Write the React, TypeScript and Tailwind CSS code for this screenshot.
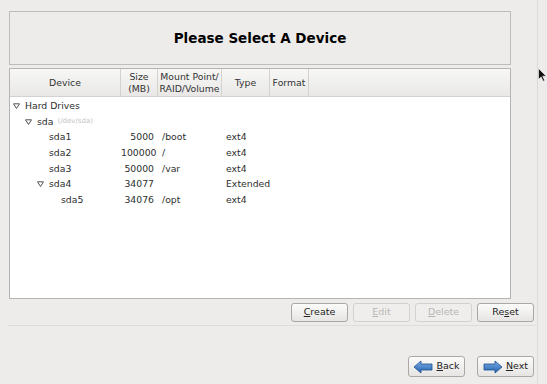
import React from "react";

type Row = {
  name: string;
  indent: number;
  expander?: boolean;
  note?: string;
  size?: string;
  mount?: string;
  type?: string;
};

const rows: Row[] = [
  { name: "Hard Drives", indent: 0, expander: true },
  { name: "sda", indent: 1, expander: true, note: "(/dev/sda)" },
  { name: "sda1", indent: 2, size: "5000", mount: "/boot", type: "ext4" },
  { name: "sda2", indent: 2, size: "100000", mount: "/", type: "ext4" },
  { name: "sda3", indent: 2, size: "50000", mount: "/var", type: "ext4" },
  { name: "sda4", indent: 2, expander: true, size: "34077", type: "Extended" },
  { name: "sda5", indent: 3, size: "34076", mount: "/opt", type: "ext4" },
];

// left edge of the name text for each depth
const namePad = ["pl-[15px]", "pl-[27px]", "pl-[39px]", "pl-[51px]"];
// left edge of the expander triangle for each depth
const triLeft = ["left-[3px]", "left-[15px]", "left-[27px]", "left-[39px]"];

function Triangle() {
  return (
    <svg width="7" height="6" viewBox="0 0 7 6">
      <path d="M0.5 0.8h6L3.5 5.5z" fill="none" stroke="#555" strokeWidth="1" />
    </svg>
  );
}

function Arrow({ dir }: { dir: "left" | "right" }) {
  return (
    <svg width="20" height="14" viewBox="0 0 20 14" className="shrink-0">
      <defs>
        <linearGradient id={`g-${dir}`} x1="0" y1="0" x2="0" y2="1">
          <stop offset="0" stopColor="#7fb0e6" />
          <stop offset="1" stopColor="#1f5fae" />
        </linearGradient>
      </defs>
      <path
        d={dir === "left" ? "M1 7L8 1v3h11v6H8v3z" : "M19 7L12 1v3H1v6h11v3z"}
        fill={`url(#g-${dir})`}
        stroke="#1d4f8f"
        strokeWidth="0.8"
      />
    </svg>
  );
}

function Btn({ label, u, disabled }: { label: string; u: number; disabled?: boolean }) {
  return (
    <div
      className={`w-[57px] h-[19px] flex items-center justify-center rounded-[3px] border text-[9.5px] ${
        disabled
          ? "border-[#d2d1cf] bg-[#efeeed] text-[#b8b7b5]"
          : "border-[#a9a8a6] bg-gradient-to-b from-[#fbfbfa] to-[#e6e5e3] text-[#222]"
      }`}
    >
      {label.slice(0, u)}
      <span className="underline underline-offset-[1px]">{label[u]}</span>
      {label.slice(u + 1)}
    </div>
  );
}

export default function App() {
  return (
    <div
      className="w-[547px] h-[384px] bg-[#edeceb] relative overflow-hidden text-[#2e2e2e]"
      style={{ fontFamily: '"DejaVu Sans", Verdana, sans-serif' }}
    >
      <div className="absolute top-0 right-[9px] w-px h-full bg-[#dcdbd9]" />
      <div className="pl-[9px] pt-[11px] w-[511px]">
        <div className="h-[54px] border border-[#bebdbb] flex items-center justify-center">
          <span className="text-[13.5px] font-bold text-black">Please Select A Device</span>
        </div>

        <div className="mt-[3px] h-[231px] border border-[#b5b4b2] bg-white flex flex-col">
          <div className="h-[28px] flex text-[9.3px] leading-[12px] text-[#333] bg-gradient-to-b from-[#f7f7f6] to-[#e9e8e7] border-b border-[#d3d2d0]">
            <div className="w-[111px] flex items-center justify-center border-r border-[#d3d2d0]">Device</div>
            <div className="w-[37px] flex flex-col items-center justify-center border-r border-[#d3d2d0]">
              <span>Size</span>
              <span>(MB)</span>
            </div>
            <div className="w-[64px] flex flex-col items-center justify-center border-r border-[#d3d2d0] whitespace-nowrap">
              <span>Mount Point/</span>
              <span>RAID/Volume</span>
            </div>
            <div className="w-[48px] flex items-center justify-center border-r border-[#d3d2d0]">Type</div>
            <div className="w-[39px] flex items-center justify-center border-r border-[#d3d2d0]">Format</div>
            <div className="flex-1" />
          </div>

          <div className="pt-[1px] text-[9.3px]">
            {rows.map((r) => (
              <div key={r.name} className="h-[15.7px] flex items-center">
                <div className={`w-[111px] relative flex items-center whitespace-nowrap ${namePad[r.indent]}`}>
                  {r.expander && (
                    <span className={`absolute top-1/2 -translate-y-1/2 flex ${triLeft[r.indent - (r.indent === 2 ? 0 : 0)]}`}>
                      <Triangle />
                    </span>
                  )}
                  <span className={r.indent === 2 && r.expander ? "" : ""}>{r.name}</span>
                  {r.note && <span className="ml-[4px] text-[7px] text-[#c4c4c4]">{r.note}</span>}
                </div>
                <div className="w-[37px] text-right pr-[4px]">{r.size}</div>
                <div className="w-[64px] pl-[4px]">{r.mount}</div>
                <div className="w-[48px] pl-[4px]">{r.type}</div>
              </div>
            ))}
          </div>
        </div>
      </div>

      <div className="flex justify-end gap-[5px] pr-[13px] mt-[4px]">
        <Btn label="Create" u={0} />
        <Btn label="Edit" u={0} disabled />
        <Btn label="Delete" u={0} disabled />
        <Btn label="Reset" u={2} />
      </div>
      <div className="mt-[3px] ml-[8px] w-[528px] h-px bg-[#dedddb]" />

      <div className="flex justify-end gap-[12px] pr-[13px] mt-[30px]">
        <div className="w-[57px] h-[21px] flex items-center justify-center gap-[3px] rounded-[3px] border border-[#a9a8a6] bg-gradient-to-b from-[#fbfbfa] to-[#e6e5e3] text-[9.5px] text-[#222]">
          <Arrow dir="left" />
          <span>
            <span className="underline underline-offset-[1px]">B</span>ack
          </span>
        </div>
        <div className="w-[57px] h-[21px] flex items-center justify-center gap-[3px] rounded-[3px] border border-[#a9a8a6] bg-gradient-to-b from-[#fbfbfa] to-[#e6e5e3] text-[9.5px] text-[#222]">
          <Arrow dir="right" />
          <span>
            <span className="underline underline-offset-[1px]">N</span>ext
          </span>
        </div>
      </div>

      <svg className="absolute left-[538px] top-[68px]" width="9" height="14" viewBox="0 0 9 14">
        <path d="M0.5 0.5v11l2.6-2.6 2 4.3 1.6-0.8-2-4.2h3.6z" fill="#111" stroke="#fff" strokeWidth="0.6" />
      </svg>
    </div>
  );
}
